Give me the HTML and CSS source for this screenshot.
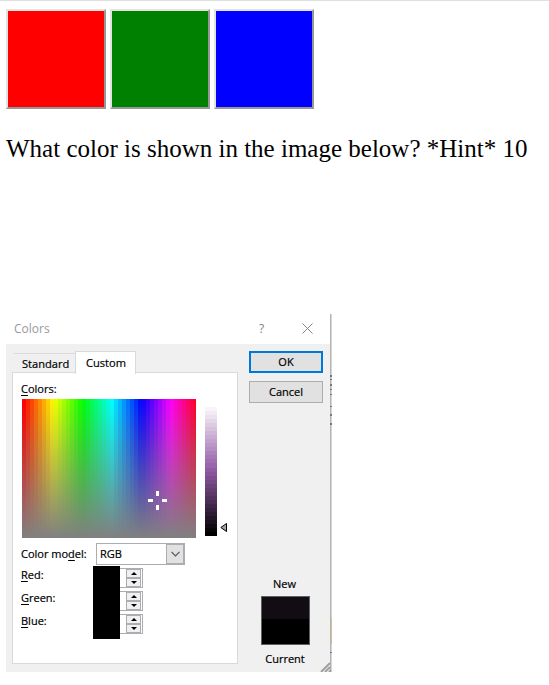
FILE: index.html
```html
<!DOCTYPE html>
<html lang="en">
<head>
<meta charset="utf-8">
<title>Color quiz</title>
<link rel="stylesheet" href="styles.css">
</head>
<body>
<div class="choices">
  <button class="choice red" aria-label="Red"></button>
  <button class="choice green" aria-label="Green"></button>
  <button class="choice blue" aria-label="Blue"></button>
</div>
<p class="question"><span>What color is shown in the image below? *Hint* 10</span></p>
<section class="dialog">
  <header class="titlebar">
    <span class="title">Colors</span>
    <span class="help">?</span>
    <svg class="close" width="11" height="11" viewBox="0 0 11 11"><path d="M.5 .5l10 10M10.5 .5l-10 10" fill="none" stroke="#858585"/></svg>
  </header>
  <div class="content">
    <div class="left">
      <div class="tabs"><span class="tab">Standard</span><span class="tab active">Custom</span></div>
      <div class="panel">
        <div class="label heading"><u>C</u>olors:</div>
        <div class="pickers">
          <div class="spectrum" id="spectrum">
            <svg class="cross" width="19" height="19" viewBox="0 0 19 19"><path d="M8 0h3v5H8zM8 14h3v5H8zM0 8h5v3H0zM14 8h5v3h-5z" fill="#fff"/></svg>
          </div>
          <div class="lightness" id="lightness"></div>
          <svg class="pointer" width="8" height="9" viewBox="0 0 8 9"><path d="M6.5 .5v8L.8 4.5z" fill="#a0a0a0" stroke="#000"/></svg>
        </div>
        <div class="model">
          <span class="label">Color mo<u>d</u>el:</span>
          <div class="select"><span>RGB</span><i><svg width="9" height="6" viewBox="0 0 9 6"><path d="M.5 .8l4 4 4-4" fill="none" stroke="#555" stroke-width="1.2"/></svg></i></div>
        </div>
        <div class="channels">
          <div class="channel"><span class="label"><u>R</u>ed:</span><div class="spin"><i class="up"></i><i class="down"></i></div></div>
          <div class="channel"><span class="label"><u>G</u>reen:</span><div class="spin"><i class="up"></i><i class="down"></i></div></div>
          <div class="channel"><span class="label"><u>B</u>lue:</span><div class="spin"><i class="up"></i><i class="down"></i></div></div>
          <div class="mask"></div>
        </div>
      </div>
    </div>
    <aside class="side">
      <div class="btn primary">OK</div>
      <div class="btn">Cancel</div>
      <div class="preview">
        <span class="new">New</span>
        <div class="swatch"></div>
        <span class="current">Current</span>
      </div>
    </aside>
  </div>
  <svg class="edge" width="13" height="358" viewBox="0 0 13 358">
    <path d="M11 0h1v358h-1z" fill="#b4b4b4"/>
    <path d="M12 0h1v358h-1z" fill="#d6d6d6"/>
    <path d="M12 304h1v26h-1z" fill="#cfc09a"/>
    <path d="M11 61h2v2h-2zM11 65h2v1h-2zM11 70h2v2h-2zM11 75h2v1h-2zM11 80h2v1h-2zM11 92h2v1h-2zM11 100h2v2h-2zM11 109h2v2h-2zM11 338h2v1h-2z" fill="#777"/>
    <path d="M2 358l9-9M6 358l5-5M10 358l2-2" stroke="#a0a0a0" stroke-width="2" fill="none"/>
  </svg>
</section>
<script src="app.js"></script>
</body>
</html>
```
FILE: styles.css
```css
* { box-sizing: border-box; }
body { margin: 0; background: #fff; border-top: 1px solid #e0e0e0; color: #000; }
.choices { display: flex; gap: 4px; padding: 8px 0 0 6px; }
.choice { width: 100px; height: 100px; padding: 0; border: 2px solid; border-color: #e3e3e3 #979797 #979797 #e3e3e3; border-radius: 0; }
.red { background: #f00; }
.green { background: #008000; }
.blue { background: #00f; }
.question { margin: 25px 0 0 6px; height: 180px; font: 25px/30px "Liberation Serif", serif; white-space: nowrap; }
.dialog { position: relative; width: 326px; height: 358px; margin-left: 6px; background: #f0f0f0; font: 11px/16px "Open Sans", sans-serif; -webkit-text-stroke: .2px; }
.titlebar { display: flex; align-items: center; height: 30px; background: #fff; padding: 0 19px 0 8px; color: #999; font-size: 12px; -webkit-text-stroke: 0; }
.title { flex: 1; }
.help { width: 7px; margin-right: 36px; color: #858585; }
.close { display: block; margin-bottom: 2px; }
.content { display: flex; height: 328px; padding: 7px 0 0 6px; }
.left { width: 226px; }
.tabs { display: flex; align-items: flex-end; height: 22px; padding-left: 2px; }
.tab { width: 61px; height: 20px; padding-left: 8px; border-top: 1px solid #d9d9d9; line-height: 20px; font-size: 11.1px; }
.tab.active { position: relative; height: 23px; margin-bottom: -1px; padding-left: 10px; border: 1px solid #d9d9d9; border-bottom: 0; background: #fff; line-height: 22px; }
.panel { width: 226px; height: 292px; border: 1px solid #d9d9d9; background: #fff; padding: 8px 0 0 8px; margin-top: -1px; }
u { text-underline-offset: 2px; text-decoration-thickness: 1px; }
.heading { height: 18px; }
.pickers { display: flex; padding-left: 1px; height: 139px; }
.spectrum { position: relative; display: flex; width: 174px; height: 139px; overflow: hidden; }
.column { flex: 0 0 4px; }
.cross { position: absolute; left: 126px; top: 92px; }
.lightness { display: flex; flex-direction: column; width: 12px; height: 133px; margin: 4px 0 0 9px; }
.lightness i { flex: 1; }
.pointer { margin: 124px 0 0 3px; }
.model { display: flex; align-items: center; height: 22px; margin-top: 5px; }
.model .label { width: 75px; }
.select { display: flex; justify-content: space-between; width: 89px; height: 22px; border: 1px solid #abadb3; padding-left: 3px; line-height: 20px; }
.select i { display: flex; align-items: center; justify-content: center; width: 18px; background: #e1e1e1; border: 1px solid #abadb3; }
.channels { position: relative; padding-top: 3px; }
.channel { display: flex; justify-content: space-between; width: 122px; height: 20px; margin-bottom: 3px; line-height: 13px; }
.spin { width: 30px; height: 20px; border: 1px solid #abadb3; padding: 0 1px 1px 12px; }
.spin i { display: flex; align-items: center; justify-content: center; height: 9px; border: 1px solid #abadb3; background: #f0f0f0; }
.spin i::before { content: ""; border: 3px solid transparent; border-top-width: 0; border-bottom: 3px solid #000; }
.spin .down::before { border-top: 3px solid #000; border-bottom-width: 0; }
.mask { position: absolute; left: 72px; top: 1px; width: 27px; height: 73px; background: #000; }
.side { width: 74px; margin-left: 11px; }
.btn { height: 22px; margin-bottom: 8px; border: 1px solid #adadad; background: #e1e1e1; text-align: center; line-height: 20px; }
.btn.primary { border: 2px solid #0078d7; line-height: 18px; }
.preview { display: flex; flex-direction: column; align-items: center; padding-top: 165px; }
.new { margin-left: -3px; }
.swatch { width: 49px; height: 49px; margin: 4px 0 6px -1px; border: 1px solid #606060; background: linear-gradient(#120c14 47%, #000 47%); }
.current { margin-left: -2px; }
.edge { position: absolute; right: 0; top: 0; width: 13px; height: 358px; }
```
FILE: app.js
```js
const spectrum = document.getElementById("spectrum");
for (let i = 0; i < 44; i++) {
  const column = document.createElement("div");
  column.className = "column";
  column.style.background = `linear-gradient(hsl(${i * 360 / 44} 100% 50%), #808080)`;
  spectrum.append(column);
}

const lightness = document.getElementById("lightness");
for (let i = 0; i < 33; i++) {
  const step = document.createElement("i");
  step.style.background = `hsl(284 30% ${100 - i * 100 / 32}%)`;
  lightness.append(step);
}
```
